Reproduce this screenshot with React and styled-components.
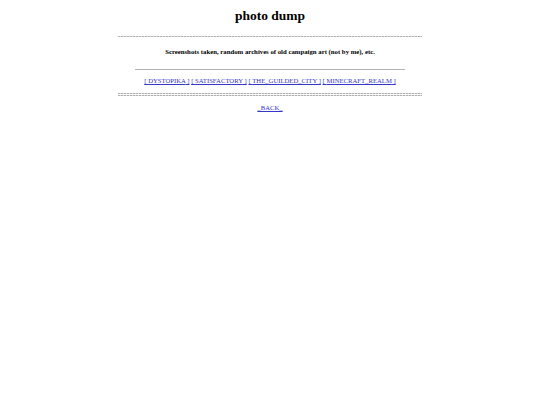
import React from "react";
import styled, { createGlobalStyle } from "styled-components";

const GlobalStyle = createGlobalStyle`
  html, body {
    margin: 0;
    padding: 0;
    background: #ffffff;
  }
  body {
    font-family: "Liberation Serif", "Times New Roman", serif;
    color: #000000;
  }
`;

const Page = styled.div`
  width: 304px;
  margin: 0 auto;
  padding-top: 8px;
  display: flex;
  flex-direction: column;
  align-items: center;
  text-align: center;
`;

const Title = styled.h1`
  margin: 0;
  font-size: 13.5px;
  font-weight: bold;
  line-height: 16px;
`;

const dash = `repeating-linear-gradient(90deg, #b0b0b0 0 2px, #dcdcdc 2px 3px)`;

const Rule = styled.div`
  width: 100%;
  height: ${(p) => (p.$double ? 3 : 1)}px;
  background: ${dash} top / 100% 1px no-repeat
    ${(p) => (p.$double ? `, ${dash} bottom / 100% 1px no-repeat` : "")};
  margin-top: ${(p) => p.$top}px;
`;

const Blurb = styled.p`
  margin: 11px 0 0;
  font-size: 6.75px;
  font-weight: bold;
  line-height: 8px;
`;

const Line = styled.hr`
  width: 270px;
  margin: 13px 0 0;
  border: 0;
  border-top: 1px solid #b4b4b4;
  height: 0;
`;

const Links = styled.div`
  margin-top: 6px;
  font-size: 6.7px;
  line-height: 9px;
`;

const Link = styled.a`
  color: #3535c8;
  text-decoration: underline;
`;

const Back = styled(Link)`
  margin-top: 7px;
  font-size: 6.7px;
  line-height: 9px;
`;

const sections = ["DYSTOPIKA", "SATISFACTORY", "THE_GUILDED_CITY", "MINECRAFT_REALM"];

export default function App() {
  return (
    <>
      <GlobalStyle />
      <Page>
        <Title>photo dump</Title>
        <Rule $top={12} />
        <Blurb>Screenshots taken, random archives of old campaign art (not by me), etc.</Blurb>
        <Line />
        <Links>
          {sections.map((s, i) => (
            <React.Fragment key={s}>
              {i > 0 && " "}
              <Link href="#">[ {s} ]</Link>
            </React.Fragment>
          ))}
        </Links>
        <Rule $double $top={8} />
        <Back href="#">_BACK_</Back>
      </Page>
    </>
  );
}
